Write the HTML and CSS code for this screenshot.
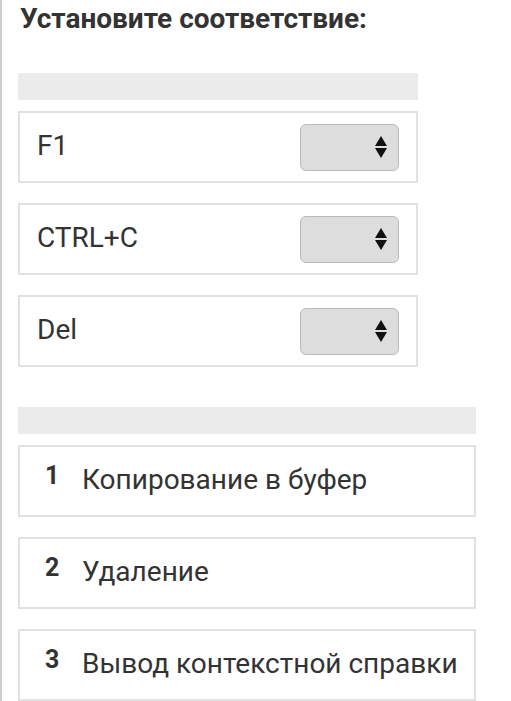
FILE: index.html
```html
<!DOCTYPE html>
<html lang="ru">
<head>
    <meta charset="UTF-8">
    <meta name="viewport" content="width=device-width, initial-scale=1.0">
    <title>Установите соответствие</title>
    <link rel="stylesheet" href="styles.css">
</head>
<body>
    <main class="page">
        <h1 class="title">Установите соответствие:</h1>

        <section class="group group-keys">
            <div class="bar"></div>
            <div class="row">
                <span class="row-text">F1</span>
                <span class="choice">
                    <svg class="choice-arrows" width="12" height="23" viewBox="0 0 12 23">
                        <path d="M6 0 L12 10 L0 10 Z" />
                        <path d="M0 12 L12 12 L6 22 Z" />
                    </svg>
                </span>
            </div>
            <div class="row">
                <span class="row-text">CTRL+C</span>
                <span class="choice">
                    <svg class="choice-arrows" width="12" height="23" viewBox="0 0 12 23">
                        <path d="M6 0 L12 10 L0 10 Z" />
                        <path d="M0 12 L12 12 L6 22 Z" />
                    </svg>
                </span>
            </div>
            <div class="row">
                <span class="row-text">Del</span>
                <span class="choice">
                    <svg class="choice-arrows" width="12" height="23" viewBox="0 0 12 23">
                        <path d="M6 0 L12 10 L0 10 Z" />
                        <path d="M0 12 L12 12 L6 22 Z" />
                    </svg>
                </span>
            </div>
        </section>

        <section class="group group-actions">
            <div class="bar"></div>
            <div class="row row-answer">
                <span class="num">1</span>
                <span class="row-text">Копирование в буфер</span>
            </div>
            <div class="row row-answer">
                <span class="num">2</span>
                <span class="row-text">Удаление</span>
            </div>
            <div class="row row-answer">
                <span class="num">3</span>
                <span class="row-text">Вывод контекстной справки</span>
            </div>
        </section>
    </main>
</body>
</html>
```

FILE: styles.css
```css
html, body {
    margin: 0;
    padding: 0;
    background: #fff;
}

body {
    font-family: Roboto, "Liberation Sans", Arial, sans-serif;
    color: #333;
}

.page {
    border-left: 2px solid #cdcdcd;
    padding: 4px 0 0 16px;
    min-height: 100vh;
    box-sizing: border-box;
}

.title {
    margin: 0;
    font-size: 28px;
    line-height: 30px;
    font-weight: bold;
    color: #333;
    padding-left: 2px;
}

.group {
    margin-top: 39px;
}

.group-keys {
    width: 400px;
}

.group-actions {
    width: 458px;
    margin-top: 40px;
}

.bar {
    height: 27px;
    background: #ebebeb;
    margin-bottom: 11px;
}

.row {
    height: 72px;
    box-sizing: border-box;
    border: 2px solid #e1e1e1;
    margin-bottom: 20px;
    display: flex;
    align-items: center;
    justify-content: space-between;
    padding: 0 17px 0 17px;
}

.row-text {
    font-size: 28px;
    color: #333;
    white-space: nowrap;
    margin-bottom: 3px;
}

.choice {
    width: 99px;
    height: 47px;
    box-sizing: border-box;
    background: #dddddd;
    border: 1px solid #b9b9b9;
    border-radius: 6px;
    display: flex;
    align-items: center;
    justify-content: flex-end;
    padding-right: 11px;
}

.choice-arrows {
    fill: #111;
}

.row-answer {
    justify-content: flex-start;
    padding: 0 8px 0 25px;
}

.num {
    flex: none;
    font-size: 25px;
    font-weight: bold;
    width: 37px;
    position: relative;
    top: -6px;
}
```
